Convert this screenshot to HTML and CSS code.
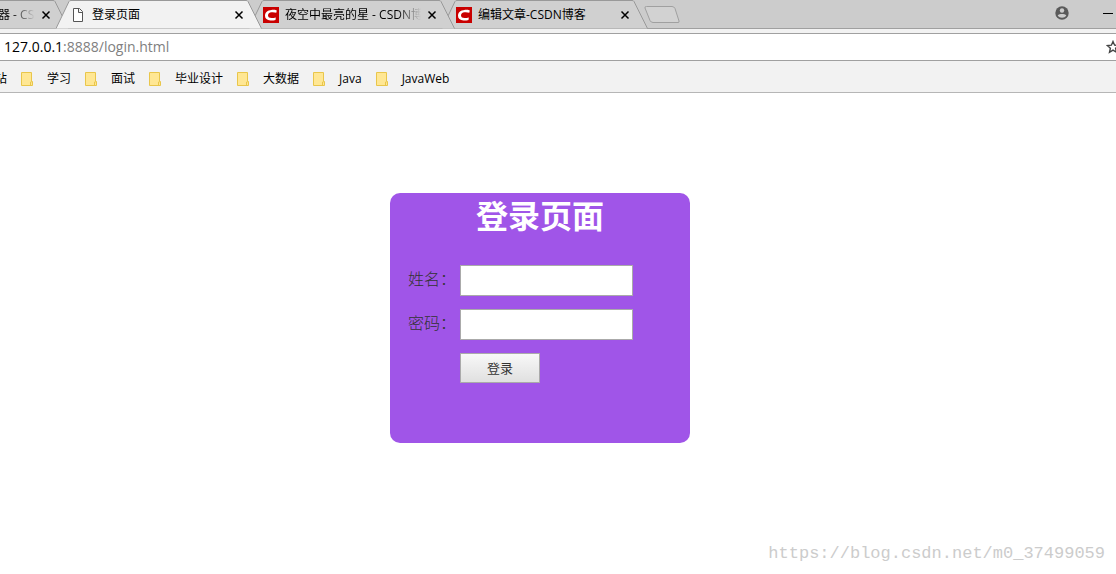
FILE: index.html
```html
<!DOCTYPE html>
<html lang="zh-CN">
<head>
<meta charset="utf-8">
<title>登录页面</title>
<link rel="stylesheet" href="styles.css">
</head>
<body>
<svg class="defs" aria-hidden="true">
  <symbol id="tab" viewBox="0 0 206 29"><path d="M0 28.500 L13 1.500 Q13.500 .5 15 .5 H190 Q191.500 .5 192 1.500 L205.500 28.500"/></symbol>
  <symbol id="close" viewBox="0 0 10 10"><path d="M1.500 1.500 8.500 8.500M8.500 1.500 1.500 8.500" fill="none" stroke="currentColor" stroke-width="1.500"/></symbol>
  <symbol id="csdn" viewBox="0 0 16 16"><path d="M0 0h16v16H0z" fill="#c90000"/><path d="M13.800 3.400 13.300 5.800C11.800 5.300 10 5.100 8.500 5.300 6.300 5.600 5 6.700 5 8.500 5 10.200 6.400 11 8.500 11c1.500 0 3-.2 4.300-.6l-.3 2.500c-1.500.5-3.200.7-5 .6C4 13.300 2 11.700 2 8.800 2 5.400 4.600 3.200 8.400 2.900c2-.1 3.900 0 5.400.5z" fill="#fff"/></symbol>
  <symbol id="folder" viewBox="0 0 12 14"><path d="M.5 .5h10v9h1v4H.5z" fill="#ffe794" stroke="#e9c64b"/><path d="M9.500 13.500v-3.500h1" fill="none" stroke="#e9c64b"/></symbol>
</svg>

<header class="browser">
  <nav class="tabs" aria-label="标签页">
    <div class="tab tab-cut">
      <svg class="tab-shape"><use href="#tab"/></svg>
      <span class="tab-title fade">器 - CSDN</span>
      <button class="close" aria-label="关闭"><svg><use href="#close"/></svg></button>
    </div>
    <div class="tab active">
      <svg class="tab-shape"><use href="#tab"/></svg>
      <svg class="favicon" viewBox="0 0 16 16"><path d="M3.500 1.500h6l3 3v10h-9zM8.500 1.500v4h4" fill="#fff" stroke="#555"/></svg>
      <span class="tab-title">登录页面</span>
      <button class="close" aria-label="关闭"><svg><use href="#close"/></svg></button>
    </div>
    <div class="tab third">
      <svg class="tab-shape"><use href="#tab"/></svg>
      <svg class="favicon"><use href="#csdn"/></svg>
      <span class="tab-title fade">夜空中最亮的星 - CSDN博客</span>
      <button class="close" aria-label="关闭"><svg><use href="#close"/></svg></button>
    </div>
    <div class="tab">
      <svg class="tab-shape"><use href="#tab"/></svg>
      <svg class="favicon"><use href="#csdn"/></svg>
      <span class="tab-title">编辑文章-CSDN博客</span>
      <button class="close" aria-label="关闭"><svg><use href="#close"/></svg></button>
    </div>
    <button class="new-tab" aria-label="新标签页"><svg viewBox="0 0 36 18"><path d="M2.500 .5H28q2 0 3 2l4 12.500q.5 1.500-1 1.500H9q-2 0-3-2L1 2Q.5 .5 2.500 .5z" fill="#d2d2d2" stroke="#a0a0a0"/></svg></button>
    <div class="window-controls">
      <button class="user" aria-label="用户"><svg viewBox="0 0 14 14"><circle cx="7" cy="7" r="6.700" fill="#5a5a5a"/><circle cx="7" cy="4.500" r="2.200" fill="#ccc"/><path d="M2.700 9.600C3.400 8 5.500 7.900 7 7.900s3.600.1 4.300 1.700C10.300 11 8.800 11.800 7 11.800S3.700 11 2.700 9.600z" fill="#ccc"/></svg></button>
      <button class="minimise" aria-label="最小化"><svg viewBox="0 0 13 14"><path d="M0 7.500h10" stroke="#000"/></svg></button>
    </div>
  </nav>

  <div class="address">
    <div class="url"><span class="host">127.0.0.1</span>:8888/login.html</div>
    <button class="star" aria-label="收藏"><svg viewBox="0 0 14 14"><path d="M7 1.500 8.600 5.200 12.700 5.500 9.600 8.200 10.500 12.300 7 10.100 3.500 12.300 4.400 8.200 1.300 5.500 5.400 5.200z" fill="none" stroke="#444" stroke-width="1.400"/></svg></button>
  </div>

  <nav class="bookmarks" aria-label="书签">
    <a class="bookmark-cut" href="#">站</a>
    <a href="#"><svg><use href="#folder"/></svg>学习</a>
    <a href="#"><svg><use href="#folder"/></svg>面试</a>
    <a href="#"><svg><use href="#folder"/></svg>毕业设计</a>
    <a href="#"><svg><use href="#folder"/></svg>大数据</a>
    <a href="#"><svg><use href="#folder"/></svg>Java</a>
    <a href="#"><svg><use href="#folder"/></svg>JavaWeb</a>
  </nav>
</header>

<main class="page">
  <form class="login">
    <h1>登录页面</h1>
    <div class="fields">
      <label for="name">姓名：</label>
      <input id="name" type="text">
      <label for="password">密码：</label>
      <input id="password" type="password">
      <button class="submit" type="button">登录</button>
    </div>
  </form>
</main>
<footer class="watermark">https://blog.csdn.net/m0_37499059</footer>
</body>
</html>
```

FILE: styles.css
```css
* { box-sizing: border-box; }

body {
  margin: 0;
  min-height: 100vh;
  display: flex;
  flex-direction: column;
  overflow-x: hidden;
  background: #fff;
  color: #000;
  font-family: "Open Sans", "Noto Sans CJK SC", sans-serif;
  font-size: 12px;
}

svg { display: block; }
.defs { position: absolute; width: 0; height: 0; }

button {
  padding: 0;
  border: 0;
  background: none;
  color: inherit;
  font-family: inherit;
}

.tabs {
  display: flex;
  height: 29px;
  background: #ccc;
  box-shadow: inset 0 -1px #a0a0a0;
  overflow: hidden;
}

.tab {
  position: relative;
  z-index: 1;
  flex: none;
  display: flex;
  align-items: center;
  gap: 6px;
  width: 206px;
  height: 29px;
  margin-right: -13px;
  padding: 0 18px 0 14px;
}
.tab-cut { width: 69px; padding-left: 0; }
.tab.third { z-index: 2; }
.tab.active { z-index: 3; }

.tab-shape {
  position: absolute;
  z-index: -1;
  top: 0;
  right: 0;
  width: 206px;
  height: 29px;
  fill: #d0d0d0;
  stroke: #999;
}
.tab.active .tab-shape { fill: #f2f2f2; }

.favicon { flex: none; width: 16px; height: 16px; }
.tab-title {
  flex: 1;
  min-width: 0;
  overflow: hidden;
  white-space: nowrap;
  line-height: 18px;
}
.tab-cut .tab-title { margin-left: -2px; }
.fade { -webkit-mask-image: linear-gradient(to left, transparent, #000 24px); mask-image: linear-gradient(to left, transparent, #000 24px); }
.close { flex: none; }
.close svg { width: 10px; height: 10px; }

.new-tab { flex: none; margin-left: 9px; }
.new-tab svg { width: 36px; height: 18px; }

.window-controls {
  display: flex;
  align-items: center;
  gap: 34px;
  height: 26px;
  margin-left: auto;
}
.user svg { width: 14px; height: 14px; }
.minimise svg { width: 13px; height: 14px; }

.address {
  display: flex;
  align-items: center;
  justify-content: space-between;
  height: 28px;
  margin-top: 4px;
  padding-left: 4px;
  overflow: hidden;
  border-top: 1px solid #a0a0a0;
  border-bottom: 1px solid #a0a0a0;
  background: #fff;
}
.browser { background: #f2f2f2; }
.url { color: #808080; font-size: 14px; line-height: 20px; }
.host { color: #000; }
.star { flex: none; margin-right: -4px; }
.star svg { width: 14px; height: 14px; }

.bookmarks {
  display: flex;
  align-items: center;
  gap: 14px;
  height: 32px;
  padding-top: 4px;
  border-bottom: 1px solid #b6b6b6;
}
.bookmarks a {
  display: flex;
  align-items: center;
  gap: 14px;
  color: #000;
  line-height: 20px;
  text-decoration: none;
}
.bookmarks svg { width: 12px; height: 14px; }
.bookmarks .bookmark-cut { margin-left: -5px; }

.page { flex: 1; padding-top: 100px; }

.login {
  width: 300px;
  min-height: 250px;
  margin-left: calc(50% - 168px);
  border-radius: 10px;
  background: #a055e8;
}
.login h1 {
  margin: 0;
  color: #fff;
  font-size: 32px;
  line-height: 46px;
  text-align: center;
}
.fields {
  display: grid;
  grid-template-columns: 52px 173px;
  row-gap: 13px;
  align-items: start;
  padding: 26px 18px;
}
.fields label {
  color: #333;
  font-family: "Noto Sans CJK SC", sans-serif;
  font-size: 16px;
  font-weight: 300;
  line-height: 26px;
}
.fields input {
  width: 100%;
  height: 31px;
  padding: 4px;
  border: 1px solid #aaa;
  background: #fff;
  font-size: 14px;
}
.submit {
  grid-column: 2;
  width: 80px;
  height: 30px;
  padding-bottom: 2px;
  border: 1px solid #aaa;
  background: linear-gradient(#f8f8f8, #e0e0e0);
  color: #333;
  font-size: 13px;
}

.watermark {
  padding: 0 11px 8px;
  color: #ccc;
  font-family: "Liberation Mono", monospace;
  font-size: 17px;
  line-height: 24px;
  text-align: right;
}
```
